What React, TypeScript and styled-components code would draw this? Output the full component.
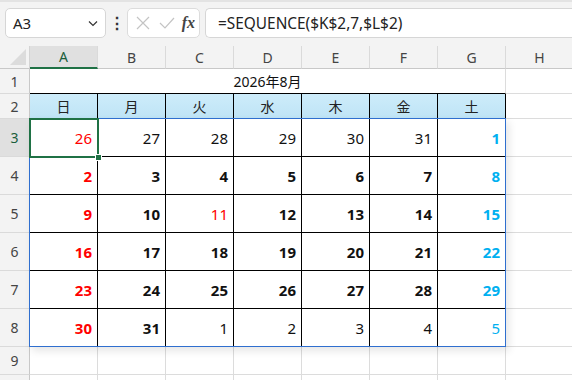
import React from 'react';
import styled, { createGlobalStyle } from 'styled-components';

const Global = createGlobalStyle`
  html, body {
    margin: 0;
    padding: 0;
    background: #ffffff;
    overflow: hidden;
  }
  body {
    font-family: "Noto Sans", "Noto Sans CJK JP", sans-serif;
  }
`;

const Page = styled.div`
  width: 572px;
  height: 380px;
  overflow: hidden;
  background: #fff;
`;

const FormulaBar = styled.div`
  height: 46px;
  border-top: 2px solid #e3e3e3;
  background: #f3f3f3;
  display: flex;
  align-items: flex-start;
  padding: 6px 0 0 5px;
  box-sizing: border-box;
`;

const NameBox = styled.div`
  width: 101px;
  height: 30px;
  box-sizing: border-box;
  background: #fff;
  border: 1px solid #d6d6d6;
  border-radius: 5px;
  display: flex;
  align-items: center;
  justify-content: space-between;
  padding: 0 6px 0 7px;
  font-size: 15px;
  color: #222;
`;

const Dots = styled.div`
  width: 21px;
  height: 30px;
  display: flex;
  align-items: center;
  justify-content: center;
  color: #333;
  font-size: 16px;
  font-weight: 700;
`;

const ActionBox = styled.div`
  width: 73px;
  height: 30px;
  box-sizing: border-box;
  background: #fff;
  border: 1px solid #dcdcdc;
  border-radius: 5px;
  display: flex;
  align-items: center;
  justify-content: space-between;
  padding: 0 4px 0 6px;
`;

const Fx = styled.span`
  font-family: "Liberation Serif", "DejaVu Serif", serif;
  font-style: italic;
  font-weight: 700;
  font-size: 16px;
  color: #444;
`;

const FormulaInput = styled.div`
  margin-left: 5px;
  flex: 1;
  height: 30px;
  box-sizing: border-box;
  background: #fff;
  border: 1px solid #d6d6d6;
  border-right: none;
  border-radius: 5px 0 0 5px;
  display: flex;
  align-items: center;
  padding-left: 12px;
  font-size: 15.4px;
  color: #222;
  font-family: "Noto Sans", sans-serif;
`;

const Sheet = styled.div`
  position: relative;
  display: grid;
  grid-template-columns: 30px repeat(8, 68px);
  grid-template-rows: 23px 25px 25px repeat(6, 38px) 28px 28px;
  font-family: "Noto Sans", "Noto Sans CJK JP", sans-serif;
`;

const Corner = styled.div`
  background: #f3f3f3;
  border-right: 1px solid #d4d4d4;
  border-bottom: 1px solid #c8c8c8;
  box-sizing: border-box;
  position: relative;
  &::after {
    content: '';
    position: absolute;
    right: 3px;
    bottom: 3px;
    width: 0;
    height: 0;
    border-left: 16px solid transparent;
    border-bottom: 16px solid #dcdcdc;
  }
`;

const ColHeader = styled.div<{ $selected?: boolean }>`
  box-sizing: border-box;
  background: ${p => (p.$selected ? '#e0e0e0' : '#f3f3f3')};
  border-right: 1px solid #dadada;
  border-bottom: ${p => (p.$selected ? '2px solid #1f7145' : '1px solid #c8c8c8')};
  display: flex;
  align-items: center;
  justify-content: center;
  font-size: 14px;
  color: ${p => (p.$selected ? '#1b5e3b' : '#444')};
`;

const RowHeader = styled.div<{ $selected?: boolean }>`
  box-sizing: border-box;
  background: ${p => (p.$selected ? '#e0e0e0' : '#f3f3f3')};
  border-right: 1px solid #c8c8c8;
  border-bottom: 1px solid #dadada;
  display: flex;
  align-items: center;
  justify-content: center;
  font-size: 14px;
  color: ${p => (p.$selected ? '#1b5e3b' : '#444')};
`;

const Cell = styled.div`
  box-sizing: border-box;
  border-right: 1px solid #dcdcdc;
  border-bottom: 1px solid #dcdcdc;
`;

const TitleCell = styled.div`
  grid-column: span 7;
  box-sizing: border-box;
  border-right: 1px solid #dcdcdc;
  border-bottom: 1px solid #000;
  display: flex;
  align-items: center;
  justify-content: center;
  font-size: 14px;
  color: #111;
`;

const DayHeader = styled.div`
  box-sizing: border-box;
  background: linear-gradient(#cdecfa, #bfe4f6);
  border-right: 1px solid #000;
  border-bottom: 1px solid #000;
  display: flex;
  align-items: center;
  justify-content: center;
  font-family: "Noto Sans CJK JP", sans-serif;
  font-size: 14px;
  color: #222;
`;

type Tone = 'sun' | 'sat' | 'hol' | 'plain';

const toneColor: Record<Tone, string> = {
  sun: '#ff0000',
  hol: '#ff0000',
  sat: '#00b0f0',
  plain: '#111',
};

const DayCell = styled.div<{ $tone: Tone; $bold: boolean }>`
  box-sizing: border-box;
  border-right: 1px solid #000;
  border-bottom: 1px solid #000;
  display: flex;
  align-items: center;
  justify-content: flex-end;
  padding-right: 5px;
  font-size: 15px;
  font-weight: ${p => (p.$bold ? 700 : 400)};
  color: ${p => toneColor[p.$tone]};
`;

const SpillFrame = styled.div`
  position: absolute;
  grid-area: 4 / 2 / 10 / 9;
  top: -1px;
  left: -1px;
  right: 0;
  bottom: 0;
  border: 1px solid #2f6fcf;
  box-shadow: 3px 4px 8px rgba(0, 0, 0, 0.1);
  pointer-events: none;
`;

const Selection = styled.div`
  position: absolute;
  grid-area: 4 / 2 / 5 / 3;
  top: -1px;
  left: -1px;
  right: -1px;
  bottom: -1px;
  border: 2px solid #1f7145;
  pointer-events: none;
`;

const FillHandle = styled.div`
  position: absolute;
  right: -5px;
  bottom: -5px;
  width: 5px;
  height: 5px;
  background: #1f7145;
  border: 1px solid #fff;
`;

const cols = ['A', 'B', 'C', 'D', 'E', 'F', 'G', 'H'];
const days = ['日', '月', '火', '水', '木', '金', '土'];

type Day = { d: number; tone: Tone; bold: boolean };

const mk = (d: number, tone: Tone, bold: boolean): Day => ({ d, tone, bold });

const fullWeek = (start: number) =>
  [0, 1, 2, 3, 4, 5, 6].map(i => mk(start + i, i === 0 ? 'sun' : i === 6 ? 'sat' : 'plain', true));

const weeks: Day[][] = [
  [mk(26, 'sun', false), mk(27, 'plain', false), mk(28, 'plain', false), mk(29, 'plain', false), mk(30, 'plain', false), mk(31, 'plain', false), mk(1, 'sat', true)],
  fullWeek(2),
  [mk(9, 'sun', true), mk(10, 'plain', true), mk(11, 'hol', false), mk(12, 'plain', true), mk(13, 'plain', true), mk(14, 'plain', true), mk(15, 'sat', true)],
  fullWeek(16),
  fullWeek(23),
  [mk(30, 'sun', true), mk(31, 'plain', true), mk(1, 'plain', false), mk(2, 'plain', false), mk(3, 'plain', false), mk(4, 'plain', false), mk(5, 'sat', false)],
];

const Chevron = () => (
  <svg width="12" height="12" viewBox="0 0 12 12">
    <path d="M2 4.5 L6 8.5 L10 4.5" fill="none" stroke="#333" strokeWidth="1.2" />
  </svg>
);

const Cross = () => (
  <svg width="18" height="18" viewBox="0 0 18 18">
    <path d="M3 3 L15 15 M15 3 L3 15" stroke="#c4c4c4" strokeWidth="1.2" fill="none" />
  </svg>
);

const Check = () => (
  <svg width="18" height="18" viewBox="0 0 18 18">
    <path d="M2 9 L7 14 L16 4" stroke="#c4c4c4" strokeWidth="1.2" fill="none" />
  </svg>
);

const App: React.FC = () => {
  return (
    <Page>
      <Global />
      <FormulaBar>
        <NameBox>
          <span>A3</span>
          <Chevron />
        </NameBox>
        <Dots>⋮</Dots>
        <ActionBox>
          <Cross />
          <Check />
          <Fx>fx</Fx>
        </ActionBox>
        <FormulaInput>=SEQUENCE($K$2,7,$L$2)</FormulaInput>
      </FormulaBar>

      <Sheet>
        <Corner />
        {cols.map(c => (
          <ColHeader key={c} $selected={c === 'A'}>{c}</ColHeader>
        ))}

        <RowHeader>1</RowHeader>
        <TitleCell>2026年8月</TitleCell>
        <Cell />

        <RowHeader>2</RowHeader>
        {days.map(d => (
          <DayHeader key={d}>{d}</DayHeader>
        ))}
        <Cell />

        {weeks.map((w, ri) => (
          <React.Fragment key={ri}>
            <RowHeader $selected={ri === 0}>{ri + 3}</RowHeader>
            {w.map((day, ci) => (
              <DayCell key={ci} $tone={day.tone} $bold={day.bold}>{day.d}</DayCell>
            ))}
            <Cell />
          </React.Fragment>
        ))}

        <RowHeader>9</RowHeader>
        {cols.map(c => (
          <Cell key={c} />
        ))}
        <RowHeader />
        {cols.map(c => (
          <Cell key={c} />
        ))}

        <SpillFrame />
        <Selection>
          <FillHandle />
        </Selection>
      </Sheet>
    </Page>
  );
};

export default App;
